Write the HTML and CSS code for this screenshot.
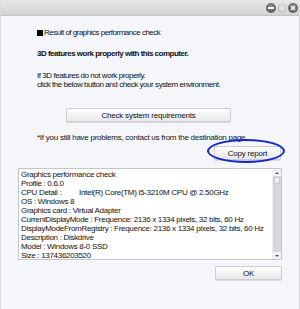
FILE: index.html
```html
<!DOCTYPE html>
<html lang="en">
<head>
    <meta charset="UTF-8">
    <title>Graphics performance check</title>
    <link rel="stylesheet" href="styles.css">
</head>
<body>
    <div class="window">
        <div class="titlebar">
            <span class="tb-btn tb-min"></span>
            <span class="tb-btn tb-max"></span>
            <span class="tb-btn tb-close">
                <svg width="10" height="10" viewBox="0 0 10 10"><path d="M3 3L7 7M7 3L3 7" stroke="#fff" stroke-width="1.4"/></svg>
            </span>
        </div>

        <div class="content">
            <p class="heading"><span class="square"></span>Result of graphics performance check</p>
            <p class="result">3D features work properly with this computer.</p>
            <p class="hint">If 3D features do not work properly.<br>click the below button and check your system environment.</p>

            <div class="center-row">
                <button class="btn btn-wide">Check system requirements</button>
            </div>

            <p class="note">*If you still have problems, contact us from the destination page.</p>

            <div class="right-row copy-row">
                <div class="circled">
                    <button class="btn btn-small">Copy report</button>
                </div>
            </div>

            <div class="report">
                <div class="report-text">Graphics performance check
Profile : 0.6.0
<span class="label">CPU Detail :</span>Intel(R) Core(TM) i5-3210M CPU @ 2.50GHz
OS : Windows 8
Graphics card : Virtual Adapter
CurrentDisplayMode : Frequence: 2136 x 1334 pixels, 32 bits, 60 Hz
DisplayModeFromRegistry : Frequence: 2136 x 1334 pixels, 32 bits, 60 Hz
Description : Diskdrive
Model : Windows 8-0 SSD
Size : 137436203520</div>
                <div class="scrollbar">
                    <span class="arrow arrow-up"></span>
                    <span class="thumb"></span>
                    <span class="track"></span>
                    <span class="arrow arrow-down"></span>
                </div>
            </div>

            <div class="right-row ok-row">
                <button class="btn btn-small">OK</button>
            </div>
        </div>
    </div>
</body>
</html>
```

FILE: styles.css
```css
html, body {
    margin: 0;
    padding: 0;
}
body {
    font-family: 'Liberation Sans', Arial, sans-serif;
    font-size: 8px;
    letter-spacing: -0.25px;
    color: #111;
    background: #f4f6fa;
}
.window {
    width: 300px;
    height: 309px;
    box-sizing: border-box;
    border-left: 1px solid #d8dbe0;
    border-right: 1px solid #d8dbe0;
    display: flex;
    flex-direction: column;
}
.titlebar {
    height: 15px;
    background: linear-gradient(#e6e6e6, #d3d3d3);
    border-bottom: 1px solid #c4c4c4;
    display: flex;
    align-items: center;
    justify-content: flex-end;
    gap: 1px;
    padding-right: 1px;
}
.tb-btn {
    width: 10px;
    height: 10px;
    border-radius: 50%;
    display: flex;
    align-items: center;
    justify-content: center;
}
.tb-min {
    background: radial-gradient(circle at 50% 35%, #8a8a8a, #505050);
}
.tb-min::after {
    content: '';
    width: 6px;
    height: 2px;
    background: #fff;
}
.tb-max {
    background: radial-gradient(circle at 50% 35%, #e6e6e6, #bcbcbc);
}
.tb-max::after {
    content: '';
    width: 4px;
    height: 4px;
    border: 1px solid #cfcfcf;
    background: #e2e2e2;
}
.tb-close {
    background: radial-gradient(circle at 50% 35%, #8a8a8a, #505050);
}
.content {
    flex: 1;
    padding: 12px 17px 0 17px;
}
p {
    margin: 0;
}
.heading {
    padding-left: 19px;
    line-height: 10px;
    letter-spacing: -0.5px;
}
.square {
    display: inline-block;
    width: 6px;
    height: 6px;
    background: #000;
    margin-right: 1px;
    vertical-align: -0.5px;
}
.result {
    padding-left: 19px;
    margin-top: 11px;
    font-weight: bold;
    line-height: 10px;
    letter-spacing: -0.5px;
}
.hint {
    padding-left: 19px;
    margin-top: 12px;
    line-height: 9px;
    letter-spacing: -0.45px;
}
.btn {
    font-family: 'Liberation Sans', Arial, sans-serif;
    font-size: 8px;
    letter-spacing: -0.2px;
    color: #111;
    background: linear-gradient(#fdfdfd, #e8e9eb);
    border: 1px solid #c9ccd1;
    border-radius: 1px;
    padding: 0;
    height: 14px;
    box-shadow: 0 1px 0 #d8dadd;
}
.center-row {
    display: flex;
    justify-content: center;
    margin-top: 19px;
    padding-right: 3px;
}
.btn-wide {
    width: 165px;
}
.note {
    padding-left: 19px;
    margin-top: 11px;
    line-height: 10px;
}
.right-row {
    display: flex;
    justify-content: flex-end;
}
.copy-row {
    margin-top: 3px;
}
.circled {
    position: relative;
    margin-right: 1px;
}
.circled::before {
    content: '';
    position: absolute;
    left: -7px;
    top: -7px;
    right: -4px;
    bottom: -3px;
    border: 2px solid #1525c8;
    border-radius: 50%;
    pointer-events: none;
}
.btn-small {
    width: 67px;
    display: block;
}
.report {
    margin-top: 8px;
    height: 92px;
    box-sizing: border-box;
    border: 1px solid #c3c6cb;
    background: #fff;
    display: flex;
}
.report-text {
    flex: 1;
    white-space: pre;
    line-height: 9px;
    padding: 1px 2px;
    overflow: hidden;
    letter-spacing: -0.3px;
}
.label {
    display: inline-block;
    width: 58px;
}
.scrollbar {
    width: 8px;
    display: flex;
    flex-direction: column;
    background: #d6d7d9;
    border-left: 1px solid #eceef0;
}
.arrow {
    height: 7px;
    background: #f2f3f5;
    display: flex;
    align-items: center;
    justify-content: center;
}
.arrow::after {
    content: '';
    border-left: 2px solid transparent;
    border-right: 2px solid transparent;
}
.arrow-up::after {
    border-bottom: 2px solid #555;
}
.arrow-down::after {
    border-top: 2px solid #555;
}
.thumb {
    height: 5px;
    margin: 1px 1px;
    background: #eceef0;
    border: 1px solid #c8c9cc;
}
.track {
    flex: 1;
}
.ok-row {
    margin-top: 6px;
}
```
